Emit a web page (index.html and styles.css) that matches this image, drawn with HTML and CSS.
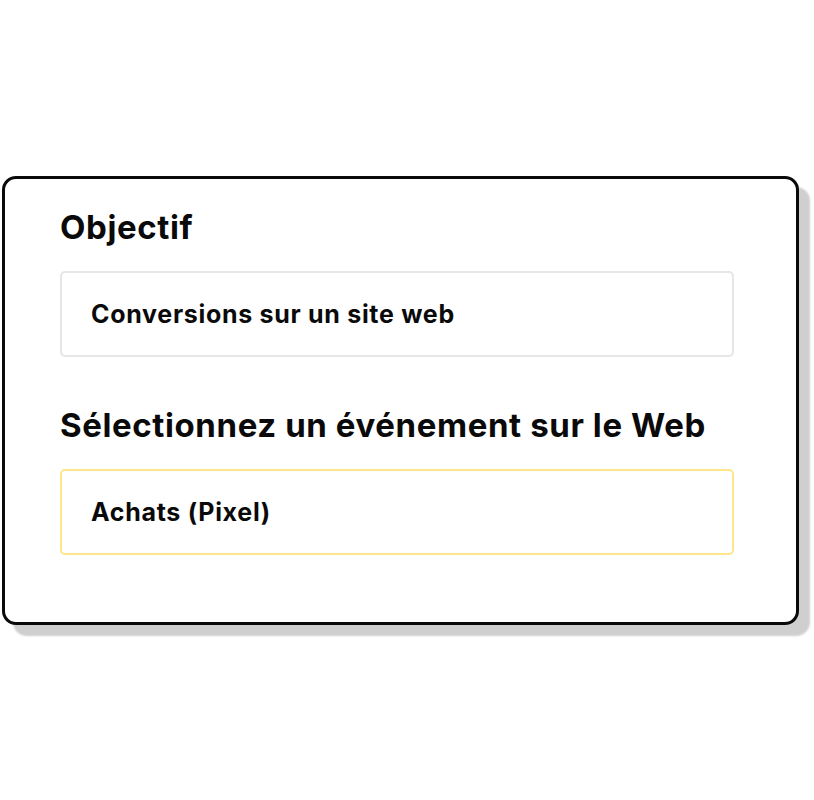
FILE: index.html
```html
<!DOCTYPE html>
<html lang="fr">
<head>
<meta charset="utf-8">
<link rel="stylesheet" href="styles.css">
</head>
<body>
<div class="card">
  <h2 class="label">Objectif</h2>
  <div class="field field-neutral">Conversions sur un site web</div>
  <h2 class="label label-second">Sélectionnez un événement sur le Web</h2>
  <div class="field field-active">Achats (Pixel)</div>
</div>
</body>
</html>
```
FILE: styles.css
```css
html, body {
  margin: 0;
  padding: 0;
  background: #ffffff;
}
body {
  width: 814px;
  height: 800px;
  font-family: Inter, "Noto Sans", sans-serif;
  color: #0a0a0a;
}
.card {
  box-sizing: border-box;
  margin: 176px 0 0 2px;
  width: 797px;
  height: 449px;
  border: 3px solid #0a0a0a;
  border-radius: 14px;
  background: #ffffff;
  box-shadow: 11px 11px 2px #cfcfcf;
  padding: 28px 62px 0 55px;
  display: flex;
  flex-direction: column;
}
.label {
  margin: 0;
  font-size: 33px;
  line-height: 40px;
  font-weight: 700;
  letter-spacing: 0.6px;
}
.label-second {
  margin-top: 48px;
}
.field {
  box-sizing: border-box;
  margin-top: 24px;
  height: 86px;
  border: 2px solid #e6e6e6;
  border-radius: 5px;
  padding: 0 29px;
  display: flex;
  align-items: center;
  font-size: 25px;
  font-weight: 700;
  letter-spacing: 0.7px;
}
.field-active {
  border-color: #fde68a;
}
```
